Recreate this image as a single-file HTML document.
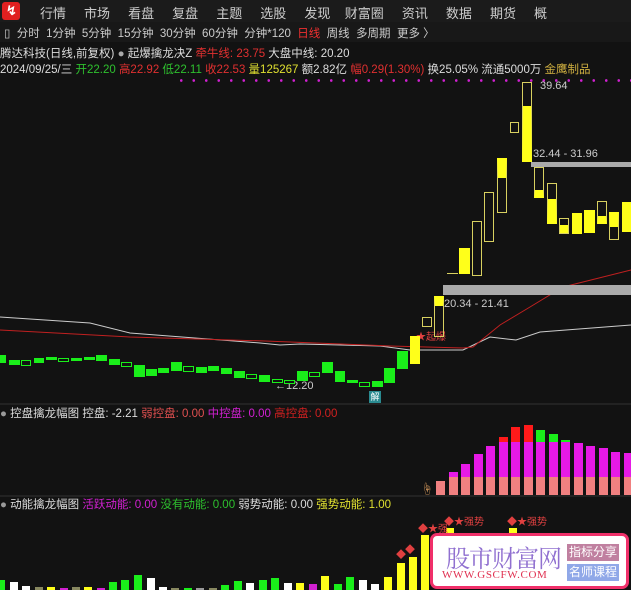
<!DOCTYPE html><html><head><meta charset="utf-8"><style>
body{margin:0;width:631px;height:590px;background:#121212;overflow:hidden;position:relative;font-family:"Liberation Sans","Noto Sans CJK SC",sans-serif;color:#ddd}
.a{position:absolute;white-space:nowrap}
.c{position:absolute;box-sizing:border-box}
.g{background:#1aee1a}
.y{background:#ffff1a}
.h{border:1px solid #d8d060}
.hg{border:1px solid #1aee1a;background:#121212}
</style></head><body>
<div class="c" style="left:0;top:0;width:631px;height:22px;background:#1b1b1b"></div>
<div class="c" style="left:2px;top:2px;width:18px;height:18px;background:#e02020;border-radius:3px"></div>
<div class="a" style="left:6px;top:3px;color:#fff;font-size:13px;font-weight:bold">↯</div>
<div class="a" style="left:40px;top:3px;font-size:13px;color:#ccc;word-spacing:0">行情&nbsp;&nbsp;&nbsp;&nbsp;&nbsp;市场&nbsp;&nbsp;&nbsp;&nbsp;&nbsp;看盘&nbsp;&nbsp;&nbsp;&nbsp;&nbsp;复盘&nbsp;&nbsp;&nbsp;&nbsp;&nbsp;主题&nbsp;&nbsp;&nbsp;&nbsp;&nbsp;选股&nbsp;&nbsp;&nbsp;&nbsp;&nbsp;发现&nbsp;&nbsp;&nbsp;&nbsp;财富圈&nbsp;&nbsp;&nbsp;&nbsp;&nbsp;资讯&nbsp;&nbsp;&nbsp;&nbsp;&nbsp;数据&nbsp;&nbsp;&nbsp;&nbsp;&nbsp;期货&nbsp;&nbsp;&nbsp;&nbsp;&nbsp;概</div>
<div class="c" style="left:0;top:22px;width:631px;height:20px;background:#181818"></div>
<div class="a" style="left:4px;top:25px;font-size:11.5px;color:#ccc">▯&nbsp;&nbsp;分时&nbsp;&nbsp;1分钟&nbsp;&nbsp;5分钟&nbsp;&nbsp;15分钟&nbsp;&nbsp;30分钟&nbsp;&nbsp;60分钟&nbsp;&nbsp;分钟*120&nbsp;&nbsp;<span style="color:#f03030">日线</span>&nbsp;&nbsp;周线&nbsp;&nbsp;多周期&nbsp;&nbsp;更多 〉</div>
<div class="a" style="left:0;top:45px;font-size:11.5px;color:#ddd">腾达科技(日线,前复权) <span style="color:#aaa">●</span> 起爆擒龙决Z <span style="color:#e03030">牵牛线: 23.75</span> 大盘中线: 20.20</div>
<div class="a" style="left:0;top:61px;font-size:11.5px;color:#ddd">2024/09/25/三 <span style="color:#2ec02e">开22.20</span> <span style="color:#e03030">高22.92</span> <span style="color:#2ec02e">低22.11</span> <span style="color:#e03030">收22.53</span> <span style="color:#e0e030">量125267</span> 额2.82亿 <span style="color:#e03030">幅0.29(1.30%)</span> 换25.05% 流通5000万 <span style="color:#d0b040">金鹰制品</span></div>
<div class="c" style="left:175px;top:79px;width:456px;height:3px;background:radial-gradient(circle,#d020d0 1.2px,transparent 1.5px) 0 0/12.5px 3px"></div>
<svg class="a" style="left:0;top:0" width="631" height="590">
<polyline fill="none" stroke="#ccc" stroke-width="1" points="0,317 90,323 130,333 260,343 280,345 300,344 380,346 410,350 463,350 490,337 516,340 540,332 631,325"/>
<polyline fill="none" stroke="#c02020" stroke-width="1" points="0,330 130,337 265,341 390,346 463,348 473,347 500,325 530,307 563,287 631,270"/>
<line x1="0" y1="404" x2="631" y2="404" stroke="#333"/>
<line x1="0" y1="496" x2="631" y2="496" stroke="#333"/>
</svg>
<div class="c" style="left:531px;top:162px;width:100px;height:5px;background:#aaa"></div>
<div class="c" style="left:443px;top:285px;width:188px;height:10px;background:#aaa"></div>
<div class="a" style="left:540px;top:80px;font-size:11px;color:#ccc">39.64</div>
<div class="a" style="left:533px;top:148px;font-size:11px;color:#ccc">32.44 - 31.96</div>
<div class="a" style="left:444px;top:298px;font-size:11px;color:#ccc">20.34 - 21.41</div>
<div class="a" style="left:275px;top:380px;font-size:11px;color:#ccc">←12.20</div>
<div class="a" style="left:416px;top:328px;font-size:10px;color:#e04040">★起爆</div>
<div class="c" style="left:369px;top:391px;width:12px;height:12px;background:#2a8a90;color:#fff;font-size:9px;text-align:center;line-height:12px">解</div>
<div class="c g" style="left:0;top:355px;width:6px;height:8px"></div>
<div class="c g" style="left:9px;top:360px;width:11px;height:5px"></div>
<div class="c hg" style="left:21px;top:360px;width:10px;height:6px"></div>
<div class="c g" style="left:34px;top:358px;width:10px;height:5px"></div>
<div class="c g" style="left:46px;top:357px;width:11px;height:3px"></div>
<div class="c hg" style="left:58px;top:358px;width:11px;height:4px"></div>
<div class="c g" style="left:71px;top:358px;width:11px;height:3px"></div>
<div class="c g" style="left:84px;top:357px;width:11px;height:3px"></div>
<div class="c g" style="left:96px;top:355px;width:11px;height:6px"></div>
<div class="c g" style="left:109px;top:359px;width:11px;height:6px"></div>
<div class="c hg" style="left:121px;top:362px;width:11px;height:5px"></div>
<div class="c g" style="left:134px;top:365px;width:11px;height:12px"></div>
<div class="c g" style="left:146px;top:369px;width:11px;height:7px"></div>
<div class="c g" style="left:158px;top:368px;width:11px;height:5px"></div>
<div class="c g" style="left:171px;top:362px;width:11px;height:9px"></div>
<div class="c hg" style="left:183px;top:366px;width:11px;height:6px"></div>
<div class="c g" style="left:196px;top:367px;width:11px;height:6px"></div>
<div class="c g" style="left:208px;top:366px;width:11px;height:5px"></div>
<div class="c g" style="left:221px;top:368px;width:11px;height:6px"></div>
<div class="c g" style="left:234px;top:371px;width:11px;height:7px"></div>
<div class="c hg" style="left:246px;top:374px;width:11px;height:5px"></div>
<div class="c g" style="left:259px;top:375px;width:11px;height:7px"></div>
<div class="c hg" style="left:272px;top:379px;width:11px;height:4px"></div>
<div class="c hg" style="left:284px;top:380px;width:11px;height:4px"></div>
<div class="c g" style="left:297px;top:371px;width:11px;height:10px"></div>
<div class="c hg" style="left:309px;top:372px;width:11px;height:5px"></div>
<div class="c g" style="left:322px;top:362px;width:11px;height:11px"></div>
<div class="c g" style="left:335px;top:371px;width:10px;height:11px"></div>
<div class="c g" style="left:347px;top:380px;width:11px;height:3px"></div>
<div class="c hg" style="left:359px;top:382px;width:11px;height:5px"></div>
<div class="c g" style="left:372px;top:381px;width:11px;height:6px"></div>
<div class="c g" style="left:384px;top:368px;width:11px;height:15px"></div>
<div class="c g" style="left:397px;top:351px;width:11px;height:18px"></div>
<div class="c y" style="left:410px;top:336px;width:10px;height:28px"></div>
<div class="c h" style="left:422px;top:317px;width:10px;height:10px"></div>
<div class="c h" style="left:434px;top:296px;width:10px;height:41px;border-top:10px solid #ffff1a"></div>
<div class="c" style="left:447px;top:273px;width:11px;height:1px;background:#d8d060"></div>
<div class="c y" style="left:459px;top:248px;width:11px;height:26px"></div>
<div class="c h" style="left:472px;top:221px;width:10px;height:55px"></div>
<div class="c h" style="left:484px;top:192px;width:10px;height:50px"></div>
<div class="c h" style="left:497px;top:158px;width:10px;height:55px;border-top:20px solid #ffff1a"></div>
<div class="c h" style="left:510px;top:122px;width:9px;height:11px"></div>
<div class="c h" style="left:522px;top:82px;width:10px;height:80px;border-bottom:56px solid #ffff1a"></div>
<div class="c h" style="left:534px;top:167px;width:10px;height:31px;border-bottom:8px solid #ffff1a"></div>
<div class="c h" style="left:547px;top:183px;width:10px;height:41px;border-bottom:25px solid #ffff1a"></div>
<div class="c h" style="left:559px;top:218px;width:10px;height:16px;background:#ffff1a;box-shadow:inset 0 6px 0 #121212"></div>
<div class="c y" style="left:572px;top:213px;width:10px;height:21px"></div>
<div class="c y" style="left:584px;top:210px;width:11px;height:23px"></div>
<div class="c h" style="left:597px;top:201px;width:10px;height:23px;border-bottom:8px solid #ffff1a"></div>
<div class="c h" style="left:609px;top:212px;width:10px;height:28px;border-top:15px solid #ffff1a"></div>
<div class="c y" style="left:622px;top:202px;width:9px;height:30px"></div>
<div class="a" style="left:0;top:405px;font-size:11.5px;color:#ddd"><span style="color:#999">●</span> 控盘擒龙幅图 控盘: -2.21 <span style="color:#e05050">弱控盘: 0.00</span> <span style="color:#d020d0">中控盘: 0.00</span> <span style="color:#d02020">高控盘: 0.00</span></div>
<div class="c" style="left:436px;top:481px;width:9px;height:14px;background:#f08080"></div>
<div class="c" style="left:449px;top:472px;width:9px;height:23px;background:linear-gradient(#e619e6 0 5px,#f08080 5px)"></div>
<div class="c" style="left:461px;top:464px;width:9px;height:31px;background:linear-gradient(#e619e6 0 13px,#f08080 13px)"></div>
<div class="c" style="left:474px;top:454px;width:9px;height:41px;background:linear-gradient(#e619e6 0 23px,#f08080 23px)"></div>
<div class="c" style="left:486px;top:446px;width:9px;height:49px;background:linear-gradient(#e619e6 0 31px,#f08080 31px)"></div>
<div class="c" style="left:499px;top:437px;width:9px;height:58px;background:linear-gradient(#ff1a1a 0 5px,#e619e6 5px 40px,#f08080 40px)"></div>
<div class="c" style="left:511px;top:427px;width:9px;height:68px;background:linear-gradient(#ff1a1a 0 15px,#e619e6 15px 50px,#f08080 50px)"></div>
<div class="c" style="left:524px;top:425px;width:9px;height:70px;background:linear-gradient(#ff1a1a 0 17px,#e619e6 17px 52px,#f08080 52px)"></div>
<div class="c" style="left:536px;top:430px;width:9px;height:65px;background:linear-gradient(#1aee1a 0 12px,#e619e6 12px 47px,#f08080 47px)"></div>
<div class="c" style="left:549px;top:434px;width:9px;height:61px;background:linear-gradient(#1aee1a 0 8px,#e619e6 8px 43px,#f08080 43px)"></div>
<div class="c" style="left:561px;top:440px;width:9px;height:55px;background:linear-gradient(#1aee1a 0 2px,#e619e6 2px 37px,#f08080 37px)"></div>
<div class="c" style="left:574px;top:443px;width:9px;height:52px;background:linear-gradient(#e619e6 0 34px,#f08080 34px)"></div>
<div class="c" style="left:586px;top:446px;width:9px;height:49px;background:linear-gradient(#e619e6 0 31px,#f08080 31px)"></div>
<div class="c" style="left:599px;top:448px;width:9px;height:47px;background:linear-gradient(#e619e6 0 29px,#f08080 29px)"></div>
<div class="c" style="left:611px;top:452px;width:9px;height:43px;background:linear-gradient(#e619e6 0 25px,#f08080 25px)"></div>
<div class="c" style="left:624px;top:453px;width:7px;height:42px;background:linear-gradient(#e619e6 0 24px,#f08080 24px)"></div>
<div class="a" style="left:421px;top:480px;font-size:12px;color:#e0a060">☝</div>
<div class="a" style="left:0;top:496px;font-size:11.5px;color:#ddd"><span style="color:#999">●</span> 动能擒龙幅图 <span style="color:#d020d0">活跃动能: 0.00</span> <span style="color:#2ec02e">没有动能: 0.00</span> 弱势动能: 0.00 <span style="color:#e0e030">强势动能: 1.00</span></div>
<div class="c g" style="left:0;top:580px;width:5px;height:10px"></div>
<div class="c" style="left:10px;top:582px;width:8px;height:8px;background:#fff"></div>
<div class="c" style="left:22px;top:586px;width:8px;height:4px;background:#fff"></div>
<div class="c" style="left:35px;top:587px;width:8px;height:3px;background:#888860"></div>
<div class="c y" style="left:47px;top:587px;width:8px;height:3px"></div>
<div class="c" style="left:60px;top:588px;width:8px;height:2px;background:#d020d0"></div>
<div class="c" style="left:72px;top:587px;width:8px;height:3px;background:#888860"></div>
<div class="c y" style="left:84px;top:587px;width:8px;height:3px"></div>
<div class="c" style="left:97px;top:588px;width:8px;height:2px;background:#d020d0"></div>
<div class="c g" style="left:109px;top:582px;width:8px;height:8px"></div>
<div class="c g" style="left:121px;top:580px;width:8px;height:10px"></div>
<div class="c g" style="left:134px;top:575px;width:8px;height:15px"></div>
<div class="c" style="left:147px;top:578px;width:8px;height:12px;background:#fff"></div>
<div class="c" style="left:159px;top:587px;width:8px;height:3px;background:#fff"></div>
<div class="c" style="left:171px;top:588px;width:8px;height:2px;background:#888860"></div>
<div class="c g" style="left:184px;top:588px;width:8px;height:2px"></div>
<div class="c" style="left:196px;top:588px;width:8px;height:2px;background:#999"></div>
<div class="c" style="left:209px;top:588px;width:8px;height:2px;background:#888860"></div>
<div class="c g" style="left:221px;top:585px;width:8px;height:5px"></div>
<div class="c g" style="left:234px;top:581px;width:8px;height:9px"></div>
<div class="c" style="left:246px;top:583px;width:8px;height:7px;background:#fff"></div>
<div class="c g" style="left:259px;top:580px;width:8px;height:10px"></div>
<div class="c g" style="left:271px;top:578px;width:8px;height:12px"></div>
<div class="c" style="left:284px;top:583px;width:8px;height:7px;background:#fff"></div>
<div class="c y" style="left:296px;top:583px;width:8px;height:7px"></div>
<div class="c" style="left:309px;top:584px;width:8px;height:6px;background:#d020d0"></div>
<div class="c y" style="left:321px;top:576px;width:8px;height:14px"></div>
<div class="c g" style="left:334px;top:584px;width:8px;height:6px"></div>
<div class="c g" style="left:346px;top:577px;width:8px;height:13px"></div>
<div class="c" style="left:359px;top:580px;width:8px;height:10px;background:#fff"></div>
<div class="c" style="left:371px;top:584px;width:8px;height:6px;background:#fff"></div>
<div class="c y" style="left:384px;top:577px;width:8px;height:13px"></div>
<div class="c y" style="left:397px;top:563px;width:8px;height:27px"></div>
<div class="c y" style="left:409px;top:557px;width:8px;height:33px"></div>
<div class="c y" style="left:421px;top:535px;width:8px;height:55px"></div>
<div class="c y" style="left:446px;top:528px;width:8px;height:10px"></div>
<div class="c y" style="left:509px;top:528px;width:8px;height:10px"></div>
<div class="a" style="left:396px;top:546px;font-size:10px;color:#e04040">◆</div>
<div class="a" style="left:405px;top:541px;font-size:10px;color:#e04040">◆</div>
<div class="a" style="left:418px;top:520px;font-size:10px;color:#e04040">◆★强</div>
<div class="a" style="left:444px;top:513px;font-size:10px;color:#e04040">◆★强势</div>
<div class="a" style="left:507px;top:513px;font-size:10px;color:#e04040">◆★强势</div>
<div class="c" style="left:430px;top:533px;width:199px;height:56px;background:#fff;border:3px solid #f0306a;border-radius:7px"></div>
<div class="a" style="left:446px;top:539px;font-size:24px;color:#9070d0;font-family:'Noto Serif CJK SC',serif;letter-spacing:-1px">股市财富网</div>
<div class="a" style="left:442px;top:569px;font-size:11px;color:#e03050;font-family:'Liberation Serif',serif;letter-spacing:0.6px">WWW.GSCFW.COM</div>
<div class="a" style="left:567px;top:544px;width:52px;height:17px;background:#c080a0;color:#fff;font-size:12px;text-align:center;line-height:17px">指标分享</div>
<div class="a" style="left:567px;top:564px;width:52px;height:17px;background:#90a8e8;color:#fff;font-size:12px;text-align:center;line-height:17px">名师课程</div>
</body></html>
